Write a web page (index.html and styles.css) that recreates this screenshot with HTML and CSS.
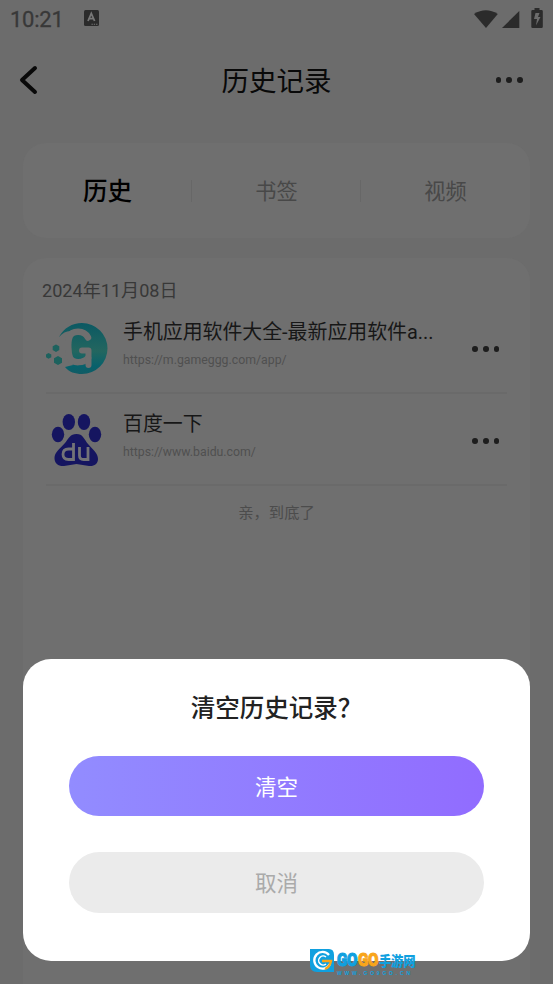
FILE: index.html
```html
<!DOCTYPE html>
<html lang="zh-CN">
<head>
<meta charset="utf-8">
<title>历史记录</title>
<link rel="stylesheet" href="styles.css">
</head>
<body>
<div class="screen">
  <div class="status">
    <span class="time">10:21</span>
    <svg class="notice" width="15" height="16" viewBox="0 0 15 16"><rect width="15" height="16" rx="1.5" fill="#2b2b2b"/><path d="M4 11 7.3 3.5 10.6 11M5.3 8.7h4" fill="none" stroke="#777" stroke-width="1.8"/><path d="M7.5 14.3h6" stroke="#777" stroke-width="1.1" stroke-dasharray="1.3 1"/></svg>
    <svg class="signals" width="70" height="22" viewBox="0 0 70 22" fill="#2b2b2b"><path d="M0 6Q11.800-1.500 23.800 6L12 20Z"/><path d="M28 20 45.300 3V20Z"/><path d="M60.500 0h5v2h2q1.300 0 1.300 1.300V18.700q0 1.300-1.300 1.300h-8.900q-1.300 0-1.300-1.300V3.300Q57.300 2 58.600 2h1.900Z"/><path d="M61.500 5h4l-1.500 4h2.500l-4.500 8.500 1-6.500h-3Z" fill="#6c6c6c"/></svg>
  </div>
  <header class="header">
    <svg width="20" height="30" viewBox="0 0 20 30"><path d="M17 3 4 15 17 27" fill="none" stroke="#090909" stroke-width="4" stroke-linecap="round" stroke-linejoin="round"/></svg>
    <h1>历史记录</h1>
    <span class="dots"><i></i><i></i><i></i></span>
  </header>
  <nav class="tabs">
    <span class="tab active">历史</span>
    <span class="tab">书签</span>
    <span class="tab">视频</span>
  </nav>
  <main class="list">
    <div class="date">2024年11月08日</div>
    <article class="item">
      <svg class="logo" width="64" height="56" viewBox="0 0 64 56">
        <defs><linearGradient id="teal" x1="0" y1="0" x2="0" y2="1"><stop offset="0" stop-color="#0b5963"/><stop offset=".55" stop-color="#23665f"/><stop offset=".85" stop-color="#07616c"/><stop offset="1" stop-color="#125b64"/></linearGradient></defs>
        <path d="M13 16C18 7 26 2 36 2A25.500 25.500 0 0 1 36 53C29 53 23 51 19 46L27 44 22 34V18L26 10Q19 9 13 16Z" fill="url(#teal)"/>
        <path d="M42 16.500C38 9 26 9 23.500 16C21.500 21 22 32 24 37C27 43 38 42 42 37" fill="none" stroke="#6f6f6f" stroke-width="6.500" stroke-linecap="round" stroke-linejoin="round"/>
        <path d="M36 29.500H42.500V44" fill="none" stroke="#6f6f6f" stroke-width="6" stroke-linecap="round" stroke-linejoin="round"/>
        <g fill="#1d625e"><path d="m10 23.500 3.300 1.800v3.700L10 31l-3.300-2v-3.700ZM2.500 32l2.800 1.400v2.800l-2.800 1.500L0 36.200v-2.800ZM12 35l4 2.200v4.500L12 44l-4-2.300v-4.500Z"/></g>
      </svg>
      <div class="info"><div class="name">手机应用软件大全-最新应用软件a...</div><div class="url">https://m.gameggg.com/app/</div></div>
      <span class="dots"><i></i><i></i><i></i></span>
    </article>
    <article class="item second">
      <svg class="logo" width="64" height="56" viewBox="0 0 64 56">
        <g fill="#151560"><ellipse cx="12" cy="22.500" rx="6.200" ry="7.700"/><ellipse cx="22.800" cy="10" rx="6.200" ry="8"/><ellipse cx="38" cy="10" rx="6.200" ry="8"/><ellipse cx="49" cy="22.500" rx="6.200" ry="7.700"/><path d="M30.500 22C37 22 38 27 42 32C47 38 52 41 52 47C52 52 48 54.500 43 54L30.500 52 18 54C13 54.500 8.500 52 8.500 46C8.500 40 14 37 19 31C23 26 24 22 30.500 22Z"/></g>
        <path d="M27.500 31v16.500h-5c-4 0-5.500-2-5.500-5.200s1.500-5.300 5.500-5.300H27.500M33.500 35v8.500q0 4 4 4H42V35" fill="none" stroke="#737377" stroke-width="2.800"/>
      </svg>
      <div class="info"><div class="name">百度一下</div><div class="url">https://www.baidu.com/</div></div>
      <span class="dots"><i></i><i></i><i></i></span>
    </article>
    <p class="end">亲，到底了</p>
  </main>
  <section class="dialog">
    <h2>清空历史记录？</h2>
    <button class="clear">清空</button>
    <button class="cancel">取消</button>
  </section>
  <div class="watermark">
    <svg width="25" height="25" viewBox="0 0 25 25"><path d="M0 1H19Q24 1 24 7V24H7Q0 24 0 17Z" fill="#10a0df"/><path d="M19 7A8.300 8.300 0 1 0 20 16" fill="none" stroke="#fff" stroke-width="2.300"/><path d="M16 9A4.500 4.500 0 1 0 16 16" fill="none" stroke="#fff" stroke-width="1.500"/><path d="M12 13H21Q20 19 15 21" fill="none" stroke="#f8a51b" stroke-width="2.300"/></svg>
    <div class="brand"><div class="brandname"><b>GO</b><b class="gold">GO</b><span>手游网</span></div><div class="site">WWW.GO9GO.CN</div></div>
  </div>
</div>
</body>
</html>
```
FILE: styles.css
```css
* { box-sizing: border-box; }
body { margin: 0; font-family: Roboto, "Noto Sans CJK SC", sans-serif; }
.screen { position: relative; width: 553px; height: 984px; overflow: hidden; background: #6c6c6c; display: flex; flex-direction: column; }
.status { height: 38px; flex: none; display: flex; align-items: flex-start; padding: 8px 9px 0 10px; color: #383838; }
.time { font-size: 22px; line-height: 24px; width: 74px; letter-spacing: -.25px; -webkit-text-stroke: .3px #383838; }
.notice { margin-top: 2px; }
.signals { margin-left: auto; }
.header { height: 84px; flex: none; display: grid; grid-template-columns: 60px 1fr 60px; align-items: center; padding: 0 30px 0 18px; }
.header h1 { margin: 0; padding: 3px 0 0 12px; font-size: 27.500px; line-height: 40px; font-weight: 400; text-align: center; color: #090909; white-space: nowrap; }
.header .dots { justify-self: end; }
.dots { display: flex; gap: 5px; }
.dots i { width: 5.800px; height: 5.800px; border-radius: 50%; background: #1d1d1d; }
.tabs { height: 95px; flex: none; margin: 21px 23px 0; border-radius: 23px; background: #6f6f6f; display: grid; grid-template-columns: repeat(3, 1fr); align-items: center; }
.tab { text-align: center; font-size: 21.200px; line-height: 20px; padding-top: 2px; color: #484848; }
.tab + .tab { border-left: 1px solid #676767; margin-left: -1px; }
.active { font-size: 24.500px; font-weight: 500; color: #000; }
.list { margin: 20px 23px 0; flex: 1; border-radius: 23px 23px 0 0; background: #6f6f6f; padding: 19px 23px 0; }
.date { font-size: 18.100px; line-height: 28px; margin-left: -4px; color: #383838; }
.item { height: 89px; border-bottom: 2px solid #6a6a6a; display: flex; align-items: flex-start; padding-top: 16px; }
.second { height: 92px; padding-top: 18px; }
.logo { flex: none; width: 64px; }
.info { width: 349px; margin: -3px 0 0 13px; }
.second .info { margin-top: -2px; }
.name { font-size: 19.900px; line-height: 30px; color: #171717; white-space: nowrap; }
.url { font-size: 12.300px; line-height: 18px; margin-top: 3px; color: #505050; }
.item .dots { margin-top: 25px; }
.second .dots { margin-top: 26px; }
.end { margin: 15px 0 0; text-align: center; font-size: 15.300px; line-height: 24px; color: #4c4c4c; }
.dialog { position: absolute; left: 23px; top: 659px; width: 507px; height: 302px; border-radius: 28px; background: #fff; padding: 30px 46px 0; display: flex; flex-direction: column; }
.dialog h2 { margin: 0 0 27px; text-align: center; font-size: 24.500px; line-height: 40px; font-weight: 500; color: #222; }
.dialog button { border: 0; border-radius: 31px; height: 60px; flex: none; font-family: inherit; font-size: 21.500px; padding: 0 0 2px; }
.dialog .clear { background: linear-gradient(90deg, #928cff, #916cff); color: #fff; }
.dialog .cancel { margin-top: 36px; height: 61px; background: #ebebeb; color: #aaa; }
.watermark { position: absolute; left: 310px; top: 948px; display: flex; gap: 2px; }
.brand { color: #10a0df; }
.brandname { display: flex; align-items: center; font: 900 12.300px/20px "Noto Sans CJK SC", sans-serif; height: 22px; padding-top: 1px; letter-spacing: -.2px; white-space: nowrap; }
.brandname span { transform: scaleY(1.15); }
.brandname b { font: 900 18px/18px Roboto, sans-serif; width: 21px; letter-spacing: -.5px; transform: scaleX(.84); transform-origin: left; -webkit-text-stroke: 1px #10a0df; }
.brandname .gold { color: #f8a51b; -webkit-text-stroke-color: #f8a51b; }
.site { font: 700 5px/5px "Liberation Sans", sans-serif; letter-spacing: 2.800px; margin-top: 1px; white-space: nowrap; }
```
